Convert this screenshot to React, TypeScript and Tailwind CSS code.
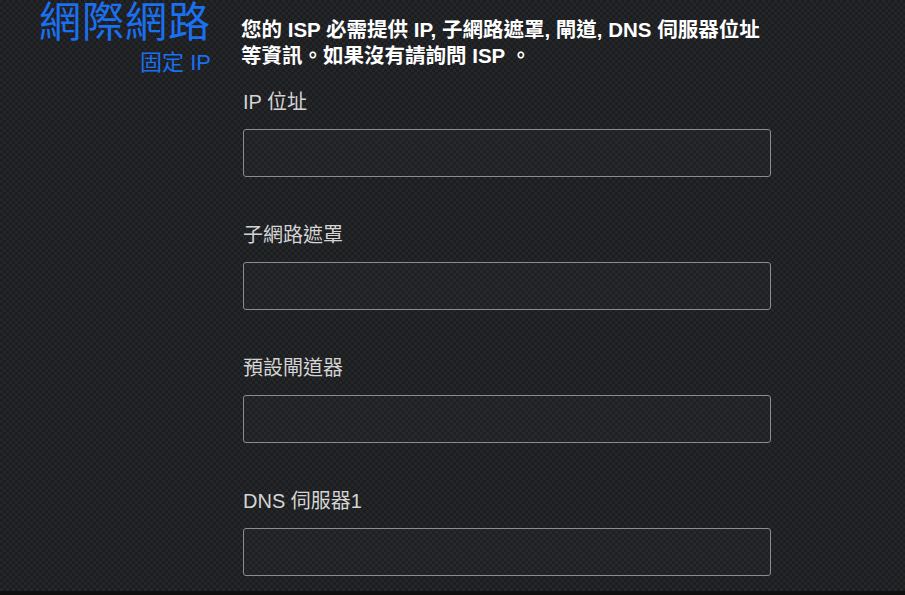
import React from "react";

const fields = ["IP 位址", "子網路遮罩", "預設閘道器", "DNS 伺服器1"];

export default function App() {
  return (
    <div className="w-[905px] h-[595px] overflow-hidden bg-[#0f0f0f] font-['Liberation_Sans','Noto_Sans_CJK_TC',sans-serif]">
      <div className="h-[591px] flex bg-[#1f2022] bg-[image:repeating-conic-gradient(#1c1d1f_0_25%,#25262a_0_50%)] bg-size-[6px_6px]">
        <div className="w-[211px] shrink-0 flex flex-col items-end">
          <div className="text-[42px] leading-[46px] text-[#1a70ee] tracking-[1px]">網際網路</div>
          <div className="text-[22px] leading-[30px] text-[#1a70ee] mt-[2px]">固定 IP</div>
        </div>
        <div className="ml-[32px] w-[540px] flex flex-col pt-[17px]">
          <p className="text-[20.5px] leading-[26px] font-bold text-white -ml-[2px]">
            您的 ISP 必需提供 IP, 子網路遮罩, 閘道, DNS 伺服器位址
            <br />
            等資訊。如果沒有請詢問 ISP 。
          </p>
          <div className="mt-[18px] flex flex-col gap-[43px]">
            {fields.map((f) => (
              <div key={f} className="flex flex-col">
                <label className="text-[20px] leading-[30px] text-[#d4d4d4]">{f}</label>
                <input
                  type="text"
                  className="mt-[12px] h-[48px] w-[528px] rounded-[3px] border border-[#8c8c8c] bg-[#ffffff04] px-3 text-white outline-none"
                />
              </div>
            ))}
          </div>
        </div>
      </div>
    </div>
  );
}
